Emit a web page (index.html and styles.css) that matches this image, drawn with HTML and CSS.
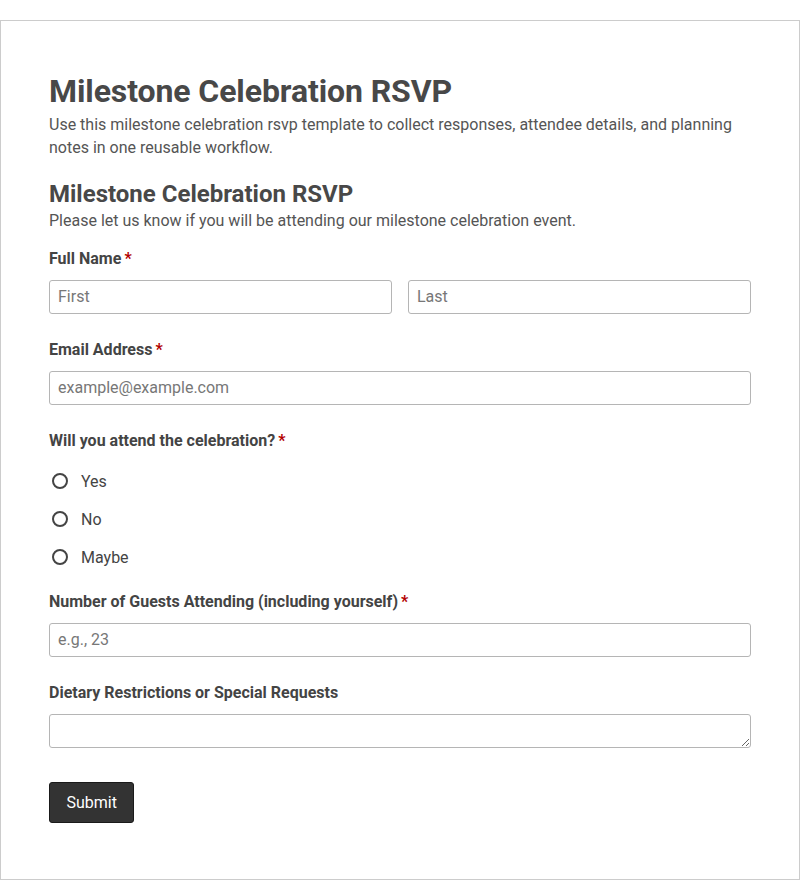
FILE: index.html
```html
<!DOCTYPE html>
<html lang="en">
<head>
    <meta charset="UTF-8">
    <meta name="viewport" content="width=device-width, initial-scale=1.0">
    <title>Milestone Celebration RSVP</title>
    <link rel="stylesheet" href="styles.css">
</head>
<body>
<div class="form-page">
    <h1 class="page-title">Milestone Celebration RSVP</h1>
    <p class="page-desc">Use this milestone celebration rsvp template to collect responses, attendee details, and planning notes in one reusable workflow.</p>

    <form class="rsvp-form">
        <h2 class="form-title">Milestone Celebration RSVP</h2>
        <p class="form-desc">Please let us know if you will be attending our milestone celebration event.</p>

        <div class="field">
            <label class="field-label">Full Name<span class="req">*</span></label>
            <div class="name-row">
                <input type="text" placeholder="First">
                <input type="text" placeholder="Last">
            </div>
        </div>

        <div class="field">
            <label class="field-label" for="email">Email Address<span class="req">*</span></label>
            <input type="email" id="email" placeholder="example@example.com">
        </div>

        <div class="field field-radio">
            <label class="field-label">Will you attend the celebration?<span class="req">*</span></label>
            <ul class="options">
                <li><label><input type="radio" name="attend"> <span>Yes</span></label></li>
                <li><label><input type="radio" name="attend"> <span>No</span></label></li>
                <li><label><input type="radio" name="attend"> <span>Maybe</span></label></li>
            </ul>
        </div>

        <div class="field">
            <label class="field-label" for="guests">Number of Guests Attending (including yourself)<span class="req">*</span></label>
            <input type="text" id="guests" placeholder="e.g., 23">
        </div>

        <div class="field">
            <label class="field-label" for="diet">Dietary Restrictions or Special Requests</label>
            <textarea id="diet"></textarea>
        </div>

        <button type="submit" class="submit-btn">Submit</button>
    </form>
</div>
</body>
</html>
```

FILE: styles.css
```css
/* Page */
body {
    font-family: Roboto, "Liberation Sans", Arial, sans-serif;
    margin: 0;
    padding: 20px 0 0;
    color: #444;
}

.form-page {
    border: 1px solid #ccc;
    padding: 51px 48px 56px;
    min-height: 751px;
}

.page-title {
    font-size: 32px;
    line-height: 38px;
    font-weight: 700;
    letter-spacing: -0.1px;
    margin: 0 0 3px;
    color: #484848;
}

.page-desc {
    font-size: 16px;
    line-height: 23px;
    margin: 0;
    color: #555;
}

/* Form */
.form-title {
    font-size: 24px;
    line-height: 29px;
    font-weight: 700;
    margin: 21px 0 0;
    color: #484848;
}

.form-desc {
    font-size: 16px;
    line-height: 23px;
    margin: 0 0 17px;
    color: #555;
}

.field {
    margin-bottom: 26px;
}

.field-label {
    display: block;
    font-size: 16px;
    line-height: 20px;
    font-weight: 700;
    margin-bottom: 11px;
    color: #444;
}

.req {
    color: #b30000;
    margin-left: 3px;
}

.name-row {
    display: flex;
    gap: 16px;
}

input[type="text"],
input[type="email"],
textarea {
    box-sizing: border-box;
    width: 100%;
    height: 34px;
    padding: 5px 8px 7px;
    border: 1px solid #b5b5b5;
    border-radius: 3px;
    font-family: inherit;
    font-size: 16px;
    color: #444;
    background: #fff;
    margin: 0;
}

input::placeholder {
    color: #777;
}

textarea {
    display: block;
    resize: vertical;
}

/* Radio options */
.options {
    list-style: none;
    margin: 0;
    padding: 0;
}

.options li {
    height: 38px;
    display: flex;
    align-items: center;
}

.options label {
    display: flex;
    align-items: center;
    font-size: 16px;
    color: #444;
    cursor: pointer;
}

.options input[type="radio"] {
    appearance: none;
    -webkit-appearance: none;
    width: 16px;
    height: 16px;
    border: 2px solid #444;
    border-radius: 50%;
    margin: 0 13px 0 3px;
    box-sizing: border-box;
}

.field-radio {
    margin-bottom: 16px;
}

/* Submit */
.submit-btn {
    margin-top: 8px;
    height: 41px;
    padding: 0 16.5px;
    background-color: #333;
    color: #fff;
    border: 1px solid #1a1a1a;
    border-radius: 3px;
    font-family: inherit;
    font-size: 16px;
    cursor: pointer;
}
```
